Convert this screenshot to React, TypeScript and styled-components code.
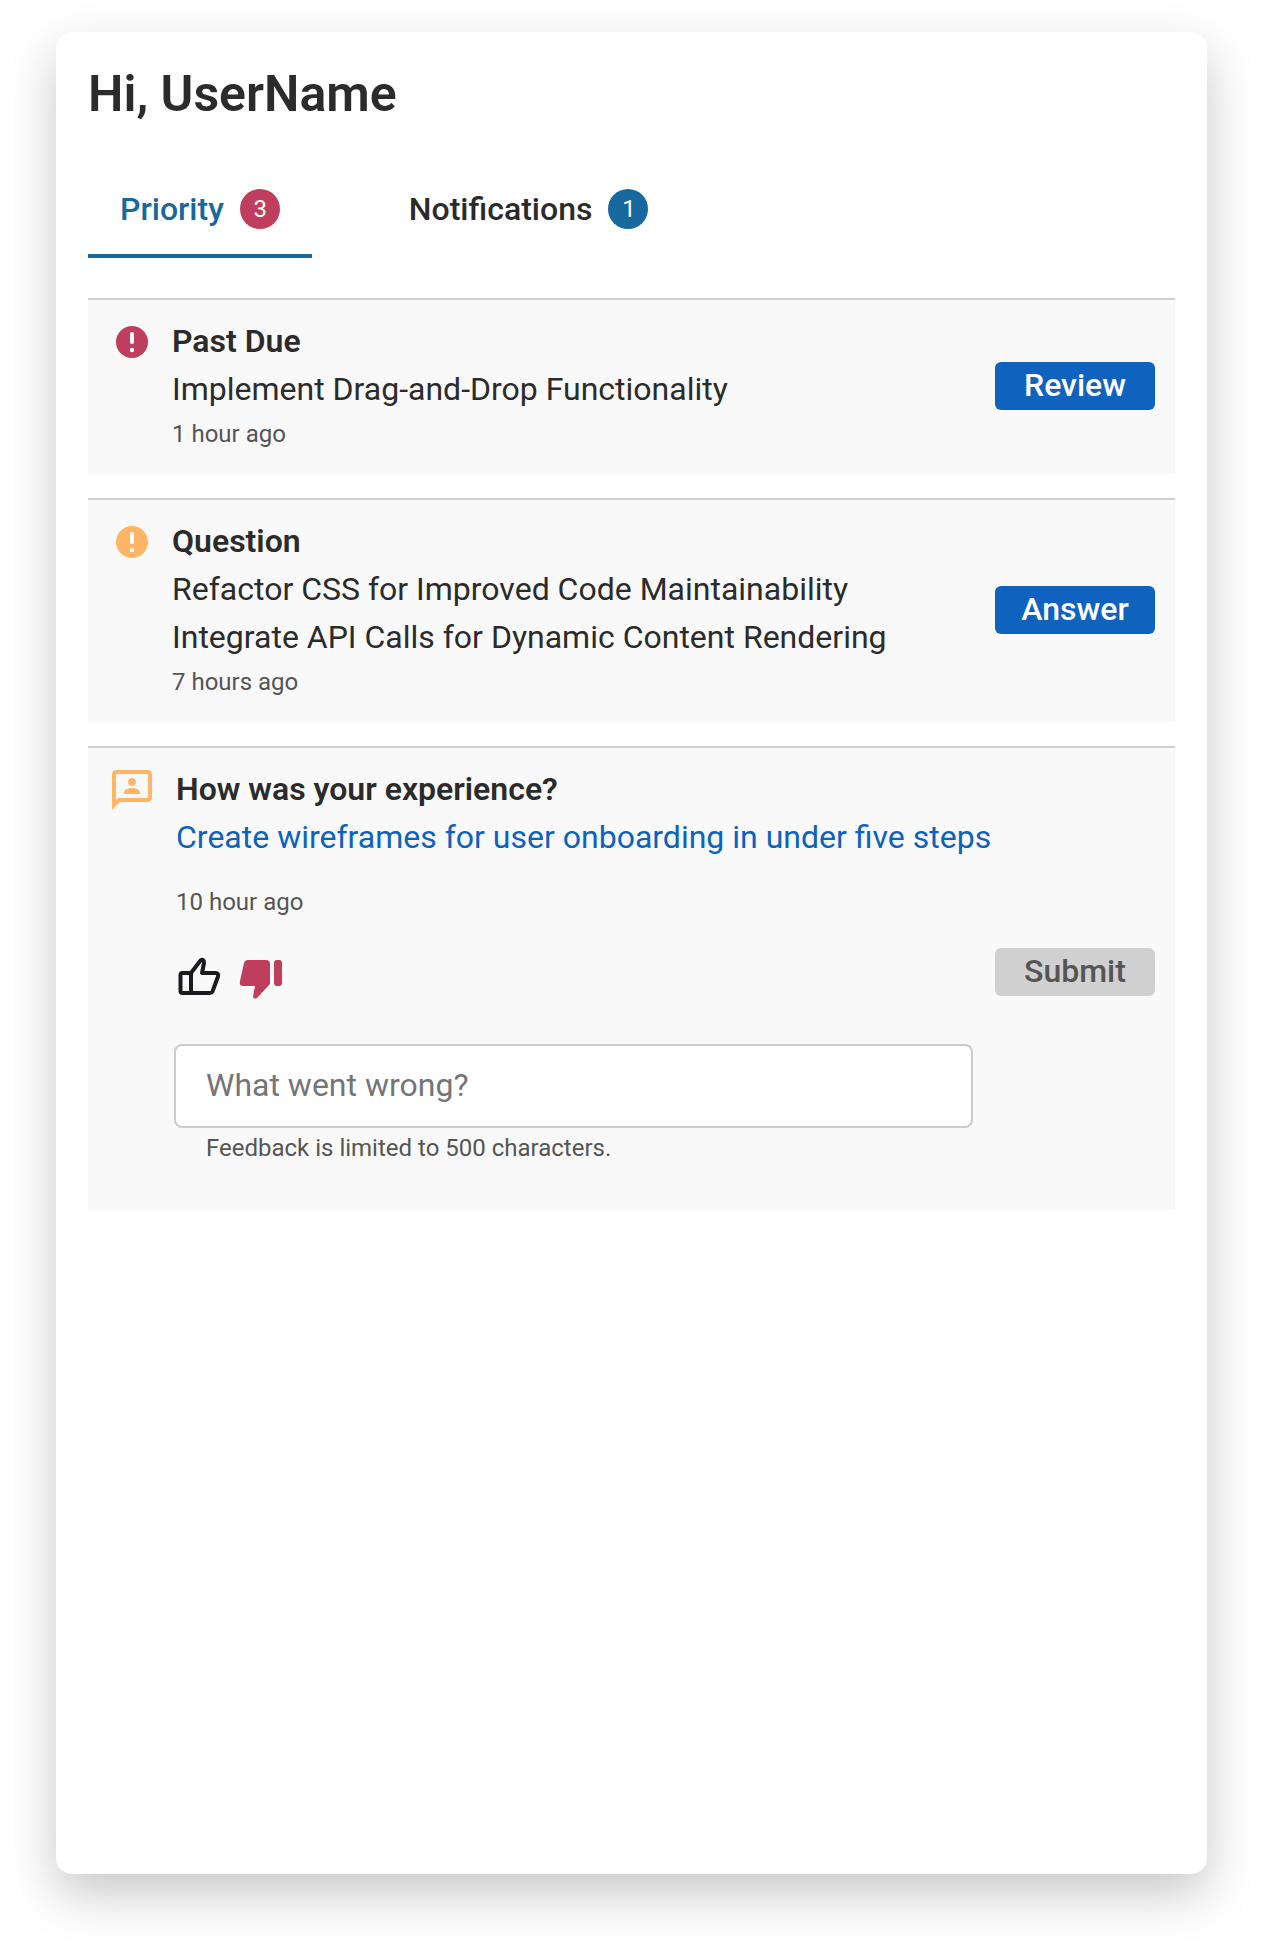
import React from "react";
import styled, { createGlobalStyle } from "styled-components";

const Global = createGlobalStyle`
  html, body { margin: 0; padding: 0; background: #fff; }
  body { font-family: Roboto, "Liberation Sans", sans-serif; color: #2b2b2b; }
  * { box-sizing: border-box; }
`;

const Page = styled.div`
  width: 1262px;
  height: 1954px;
  padding: 32px 55px 80px 56px;
  overflow: hidden;
`;

const Card = styled.main`
  height: 1842px;
  padding: 32px;
  background: #fff;
  border-radius: 16px;
  box-shadow: 0 20px 50px rgba(0, 0, 0, 0.22);
`;

const Title = styled.h1`
  margin: 0;
  font-size: 50px;
  line-height: 60px;
  font-weight: 600;
  color: #2b2b2b;
`;

const TabBar = styled.nav`
  display: flex;
  gap: 65px;
  margin-top: 40px;
`;

const Tab = styled.div<{ $active?: boolean }>`
  display: flex;
  align-items: center;
  gap: 16px;
  height: 94px;
  padding: 0 32px;
  font-size: 32px;
  font-weight: 500;
  color: ${(p) => (p.$active ? "#17689f" : "#2b2b2b")};
  border-bottom: 4px solid ${(p) => (p.$active ? "#17689f" : "transparent")};
`;

const Badge = styled.span<{ $color: string }>`
  display: flex;
  align-items: center;
  justify-content: center;
  width: 40px;
  height: 40px;
  padding-left: 1px;
  border-radius: 50%;
  background: ${(p) => p.$color};
  color: #fff;
  font-size: 24px;
  font-weight: 400;
`;

const List = styled.section`
  display: flex;
  flex-direction: column;
  gap: 24px;
  margin-top: 40px;
`;

const Row = styled.article`
  display: flex;
  align-items: flex-start;
  padding: 16px 20px 20px 28px;
  background: #f9f9f9;
  border-top: 2px solid #d0d0d0;
`;

const FeedbackRow = styled(Row)`
  height: 464px;
  padding-left: 20px;
  gap: 20px;
`;

const IconSlot = styled.div`
  flex: none;
  width: 32px;
  margin: 10px 24px 0 0;
  line-height: 0;
`;

const FeedbackIcon = styled.svg`
  flex: none;
  width: 48px;
  height: 48px;
  margin-top: 2px;
  fill: #ffb566;
`;

const Body = styled.div`
  flex: 1;
  min-width: 0;
`;

const Heading = styled.h2`
  margin: 1px 0 0;
  font-size: 32px;
  line-height: 48px;
  font-weight: 600;
  color: #2b2b2b;
`;

const Line = styled.p`
  margin: 0;
  font-size: 32px;
  line-height: 48px;
  color: #2b2b2b;
`;

const LinkLine = styled.a`
  display: block;
  font-size: 32px;
  line-height: 48px;
  color: #0c62bf;
  text-decoration: none;
`;

const Time = styled.p<{ $gap?: number }>`
  margin: ${(p) => p.$gap ?? 1}px 0 0;
  font-size: 24px;
  line-height: 40px;
  color: #555;
`;

const Action = styled.button<{ $muted?: boolean }>`
  flex: none;
  align-self: center;
  width: 160px;
  height: 48px;
  margin-top: ${(p) => (p.$muted ? 0 : 2)}px;
  padding: 0 0 2px;
  border: 0;
  border-radius: 6px;
  font-family: inherit;
  font-size: 32px;
  font-weight: 500;
  background: ${(p) => (p.$muted ? "#d0d0d0" : "#1062bf")};
  color: ${(p) => (p.$muted ? "#555" : "#fff")};
`;

const RatingBar = styled.div`
  display: flex;
  align-items: flex-start;
  justify-content: space-between;
  margin-top: 23px;
`;

const Thumbs = styled.div`
  display: flex;
  align-items: flex-start;
  gap: 17px;
  padding: 12px 0 0 2px;
`;

const ThumbIcon = styled.svg<{ $drop?: number }>`
  display: block;
  width: 44px;
  height: 40px;
  margin-top: ${(p) => p.$drop ?? 0}px;
`;

const Input = styled.input`
  display: block;
  width: 799px;
  height: 84px;
  margin: 45px 0 0 -2px;
  padding: 0 30px 3px;
  border: 2px solid #ccc;
  border-radius: 8px;
  background: #fff;
  font-family: inherit;
  font-size: 32px;
  color: #2b2b2b;
  &::placeholder { color: #757575; opacity: 1; }
`;

const Help = styled.p`
  margin: 5px 0 0;
  padding-left: 30px;
  font-size: 24px;
  line-height: 30px;
  color: #555;
`;

const AlertIcon = ({ color }: { color: string }) => (
  <svg width="32" height="32" viewBox="0 0 32 32">
    <circle cx="16" cy="16" r="16" fill={color} />
    <rect x="14" y="6" width="4" height="12" rx="2" fill="#fff" />
    <circle cx="16" cy="24" r="2.2" fill="#fff" />
  </svg>
);

export default function App() {
  return (
    <Page>
      <Global />
      <Card>
        <Title>Hi, UserName</Title>
        <TabBar>
          <Tab $active>
            Priority <Badge $color="#bf3e5e">3</Badge>
          </Tab>
          <Tab>
            Notifications <Badge $color="#17689f">1</Badge>
          </Tab>
        </TabBar>
        <List>
          <Row>
            <IconSlot>
              <AlertIcon color="#bf3e5e" />
            </IconSlot>
            <Body>
              <Heading>Past Due</Heading>
              <Line>Implement Drag-and-Drop Functionality</Line>
              <Time>1 hour ago</Time>
            </Body>
            <Action>Review</Action>
          </Row>
          <Row>
            <IconSlot>
              <AlertIcon color="#ffb566" />
            </IconSlot>
            <Body>
              <Heading>Question</Heading>
              <Line>Refactor CSS for Improved Code Maintainability</Line>
              <Line>Integrate API Calls for Dynamic Content Rendering</Line>
              <Time>7 hours ago</Time>
            </Body>
            <Action>Answer</Action>
          </Row>
          <FeedbackRow>
            <FeedbackIcon viewBox="0 0 24 24">
              <path d="M20 2H4c-1.1 0-2 .9-2 2v18l4-4h14c1.1 0 2-.9 2-2V4c0-1.1-.9-2-2-2zm0 14H5.17L4 17.17V4h16v12zM12 10c1.1 0 2-.9 2-2s-.9-2-2-2-2 .9-2 2 .9 2 2 2zm4 3.43c0-.81-.48-1.53-1.22-1.85-.85-.37-1.79-.58-2.78-.58-.99 0-1.93.21-2.78.58-.74.32-1.22 1.04-1.22 1.85V14h8v-.57z" />
            </FeedbackIcon>
            <Body>
              <Heading>How was your experience?</Heading>
              <LinkLine href="#">Create wireframes for user onboarding in under five steps</LinkLine>
              <Time $gap={21}>10 hour ago</Time>
              <RatingBar>
                <Thumbs>
                  <ThumbIcon viewBox="13 17 44 40">
                    <path
                      d="M26 33 L35.5 20.5 Q39 18.5 39 23 L37 33 H50.5 Q54 33 53 36.5 L47.5 51.5 Q46.8 53 45 53 H17.5 Q15.5 53 15.5 51 V35 Q15.5 33 17.5 33 H26 V53"
                      fill="none"
                      stroke="#1b1b1f"
                      strokeWidth="4"
                      strokeLinejoin="round"
                      strokeLinecap="round"
                    />
                  </ThumbIcon>
                  <ThumbIcon $drop={2} viewBox="74 19 44 40">
                    <path
                      d="M83 20 H101 Q105 20 105 24 V44 L92 58 Q89 59.5 88 57 L90 46 H78 Q74 46 75 41 L79 23 Q80 20 83 20 Z"
                      fill="#bf3e5e"
                    />
                    <rect x="109" y="20" width="8" height="26" rx="3" fill="#bf3e5e" />
                  </ThumbIcon>
                </Thumbs>
                <Action $muted>Submit</Action>
              </RatingBar>
              <Input placeholder="What went wrong?" />
              <Help>Feedback is limited to 500 characters.</Help>
            </Body>
          </FeedbackRow>
        </List>
      </Card>
    </Page>
  );
}
